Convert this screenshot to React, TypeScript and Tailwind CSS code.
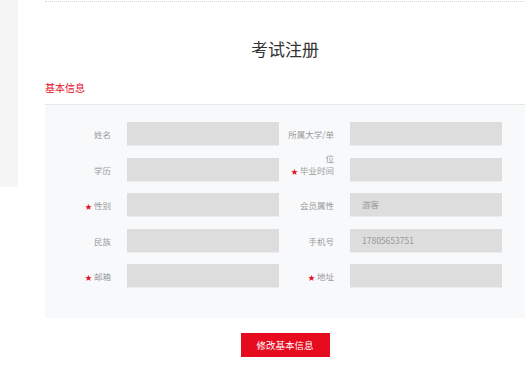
const rows: [Field, Field][] = [
  [{ label: "姓名" }, { label: "所属大学/单位" }],
  [{ label: "学历" }, { label: "毕业时间", required: true }],
  [{ label: "性别", required: true }, { label: "会员属性", value: "游客" }],
  [{ label: "民族" }, { label: "手机号", value: "17805653751" }],
  [{ label: "邮箱", required: true }, { label: "地址", required: true }],
];

type Field = { label: string; required?: boolean; value?: string };

function Cell({ f }: { f: Field }) {
  return (
    <div className="flex items-start">
      <div className="h-[24px] w-[50px] text-right text-[8.5px] leading-[24px] text-[#999]">
        {f.required && <span className="mr-[2px] text-[7px] text-[#e60b1f]">★</span>}
        {f.label}
      </div>
      <div className="ml-[16px] h-[24px] w-[152px] border-b border-[#ececec] bg-[#dddddd] pl-[12px] text-[8.5px] leading-[23px] text-[#999]">
        {f.value}
      </div>
    </div>
  );
}

export default function App() {
  return (
    <div
      className="flex h-[371px] w-[529px] overflow-hidden bg-white"
      style={{ fontFamily: '"Noto Sans CJK SC", "Noto Sans", sans-serif' }}
    >
      <div className="h-[187px] w-[18px] shrink-0 bg-[#f5f5f5]" />
      <div className="ml-[27px] w-[480px] shrink-0">
        <div className="mt-px border-t border-dotted border-[#d8d8d8]" />
        <h1 className="pt-[37px] text-center text-[17px] leading-[20px] text-[#333]">
          考试注册
        </h1>
        <div className="mt-[22px] pb-[9px] text-[10px] leading-[14px] text-[#e60b1f]">
          基本信息
        </div>
        <div className="border-t border-[#e6e6e6] bg-[#f8f9fb] pb-[30px] pl-[16px] pt-[17px]">
          <div className="flex flex-col gap-y-[11.5px]">
            {rows.map(([a, b], i) => (
              <div key={i} className="flex gap-x-[5px]">
                <Cell f={a} />
                <Cell f={b} />
              </div>
            ))}
          </div>
        </div>
        <div className="mt-[15px] flex justify-center">
          <button className="h-[24px] w-[89px] bg-[#e60b1f] text-[9.5px] text-white">
            修改基本信息
          </button>
        </div>
      </div>
    </div>
  );
}
